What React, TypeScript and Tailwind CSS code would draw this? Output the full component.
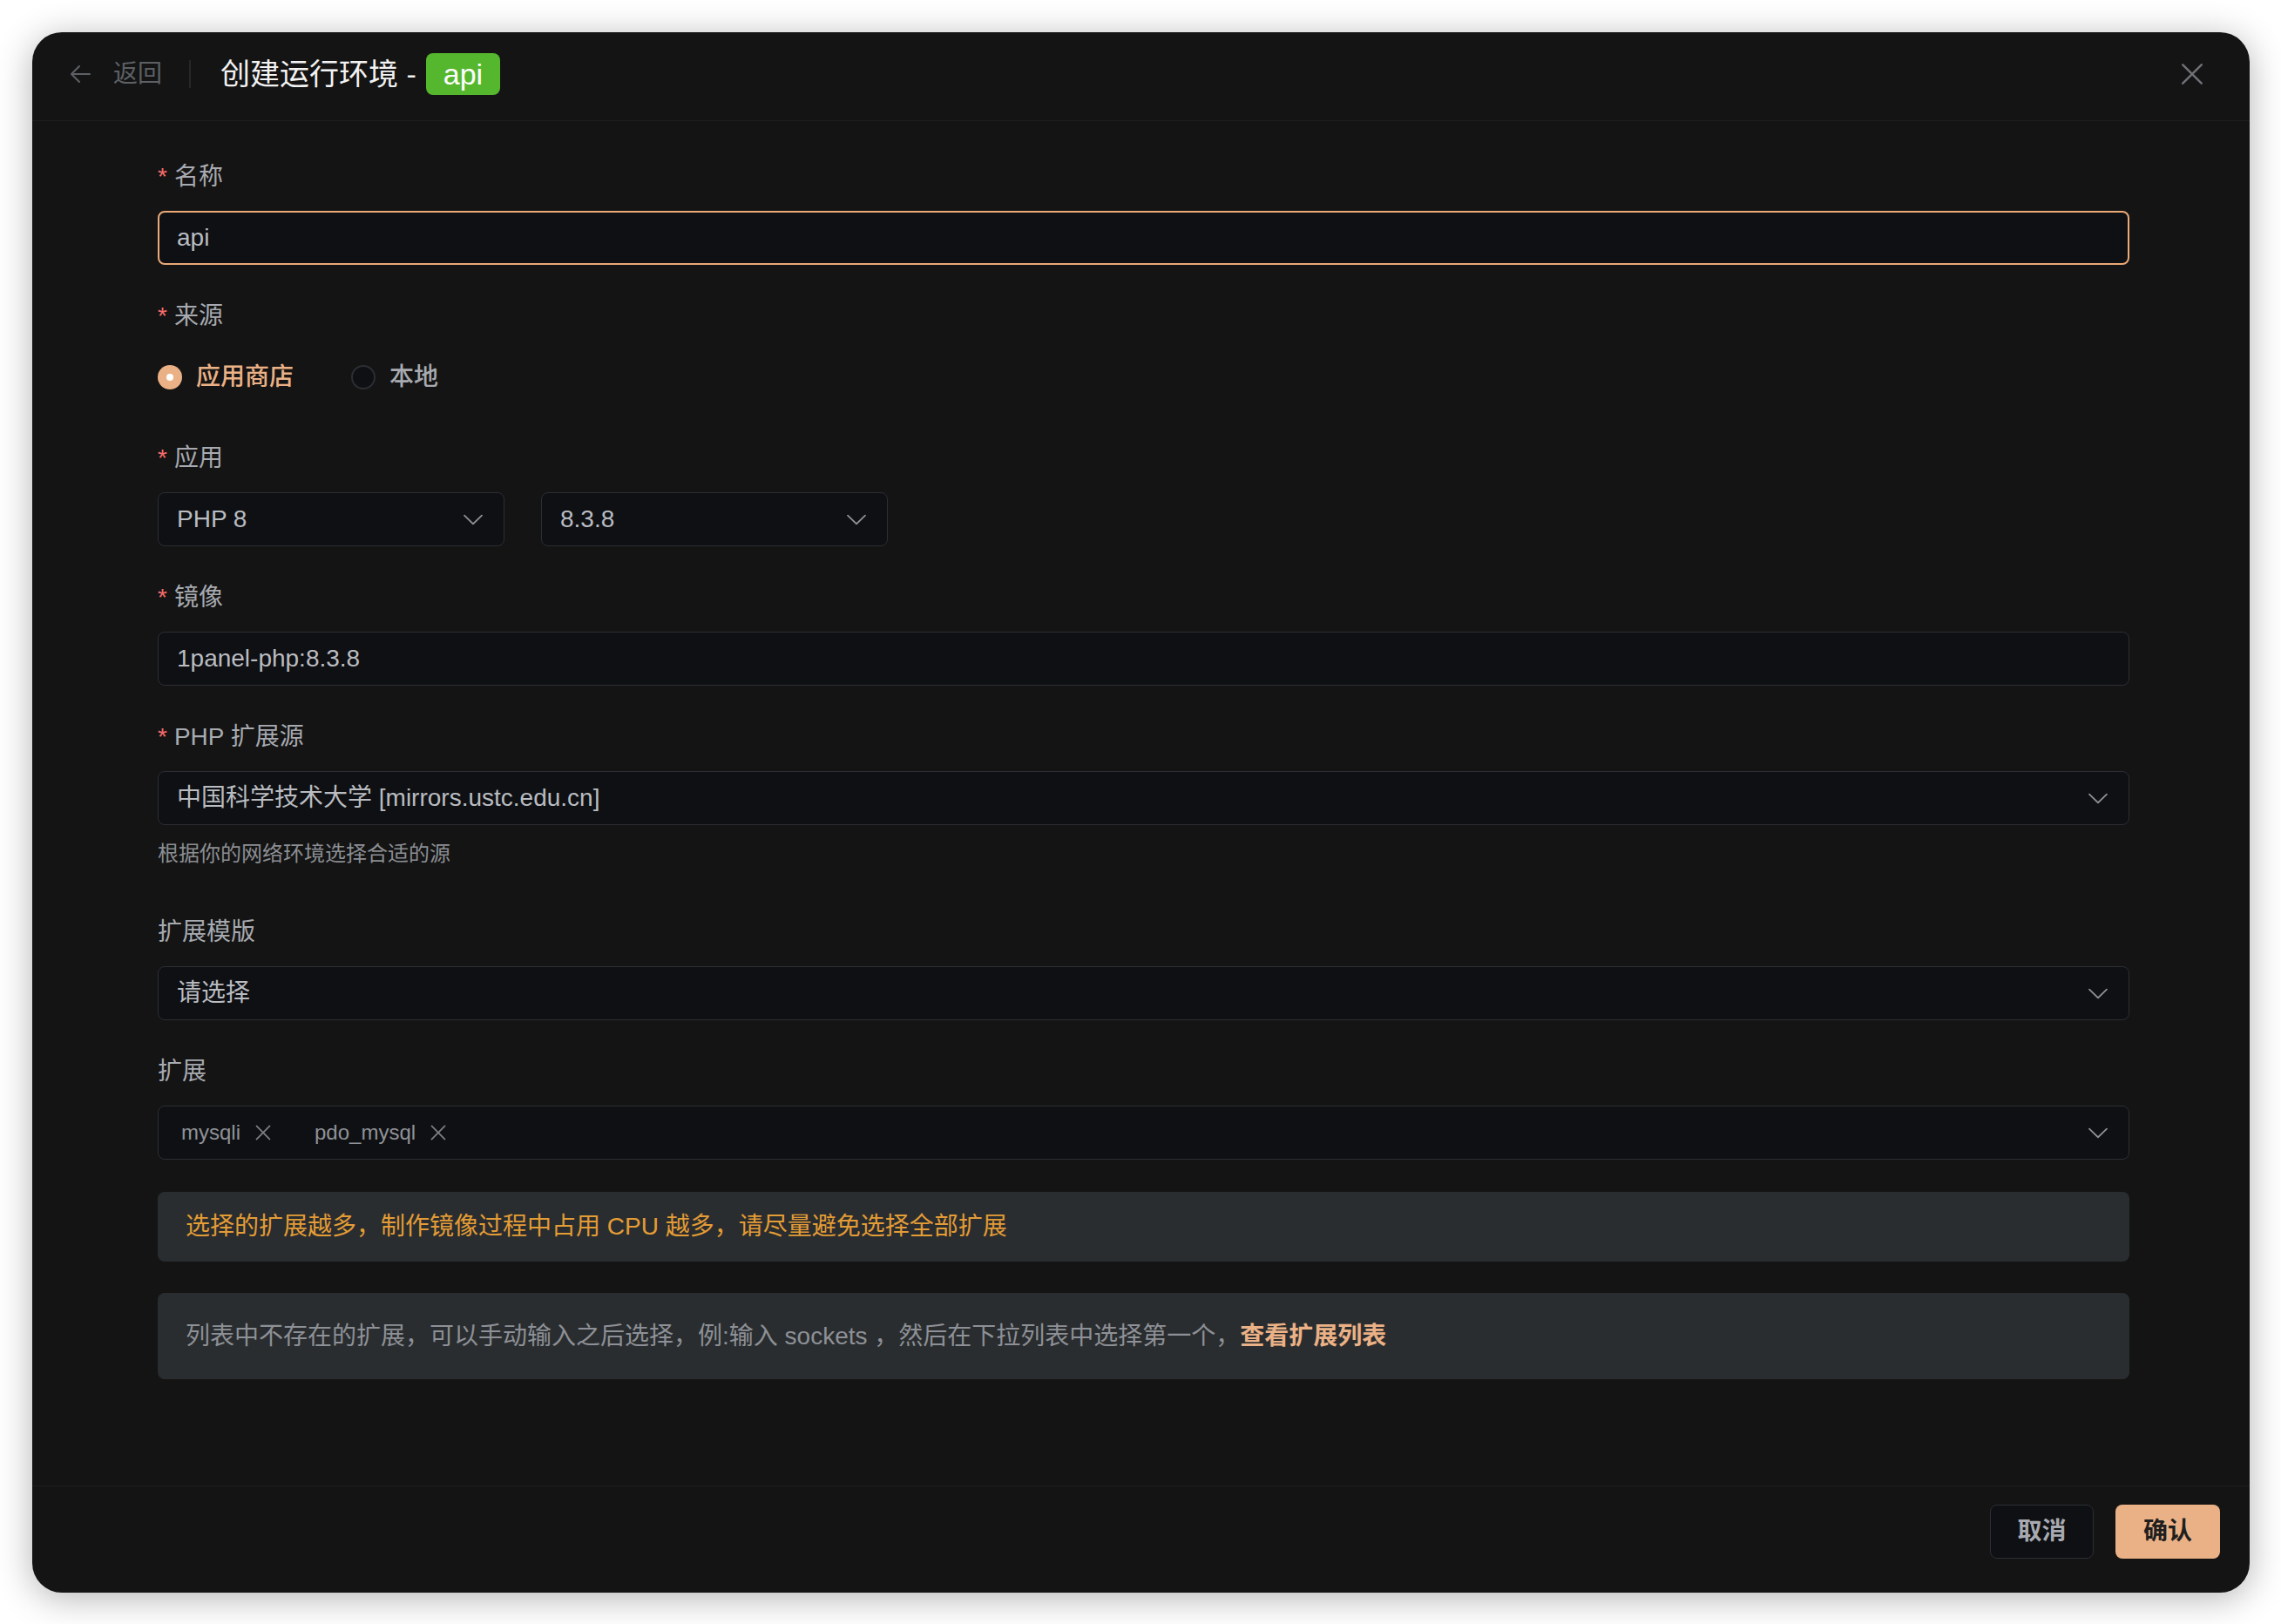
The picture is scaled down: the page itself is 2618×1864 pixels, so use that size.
import type { ReactNode } from "react";

const ARROW_DOWN =
  "M831.872 340.864 512 652.672 192.128 340.864a30.592 30.592 0 0 0-42.752 0 29.12 29.12 0 0 0 0 41.6L489.664 714.24a32 32 0 0 0 44.672 0l340.288-331.712a29.12 29.12 0 0 0 0-41.728 30.592 30.592 0 0 0-42.752 0z";
const CLOSE =
  "M764.288 214.592 512 466.88 259.712 214.592a31.936 31.936 0 0 0-45.12 45.12L466.752 512 214.528 764.224a31.936 31.936 0 1 0 45.12 45.184L512 557.184l252.288 252.288a31.936 31.936 0 0 0 45.12-45.12L557.12 512.064l252.288-252.352a31.936 31.936 0 1 0-45.12-45.184z";
const BACK_BAR = "M224 480h640a32 32 0 1 1 0 64H224a32 32 0 0 1 0-64z";
const BACK_HEAD =
  "m237.248 512 265.408 265.344a32 32 0 0 1-45.312 45.312l-288-288a32 32 0 0 1 0-45.312l288-288a32 32 0 1 1 45.312 45.312L237.248 512z";

function Icon({ d, className }: { d: string[]; className: string }) {
  return (
    <svg viewBox="0 0 1024 1024" fill="currentColor" className={className}>
      {d.map((p) => (
        <path key={p} d={p} />
      ))}
    </svg>
  );
}

function Chevron() {
  return <Icon d={[ARROW_DOWN]} className="h-[30px] w-[30px] shrink-0 text-[#8e9196]" />;
}

function FormItem({
  label,
  required,
  children,
  className = "mb-[37px]",
}: {
  label: string;
  required?: boolean;
  children: ReactNode;
  className?: string;
}) {
  return (
    <div className={className}>
      <div className="flex h-[44px] items-center text-[28px] leading-[44px] text-[#a7aab0]">
        {required && <span className="mr-[8px] text-[#f56c6c]">*</span>}
        {label}
      </div>
      <div className="mt-[17px]">{children}</div>
    </div>
  );
}

function Box({
  children,
  focused,
  className = "",
}: {
  children: ReactNode;
  focused?: boolean;
  className?: string;
}) {
  return (
    <div
      className={`flex h-[62px] items-center justify-between rounded-[8px] bg-[#0f1013] text-[28px] text-[#b9bcc1] ${
        focused ? "border-2 border-[#eaa977]" : "border border-[#2c2e33]"
      } ${className}`}
    >
      {children}
    </div>
  );
}

function SelectTag({ text }: { text: string }) {
  return (
    <div className="flex items-center">
      <span className="text-[24px] text-[#8f9298]">{text}</span>
      <Icon d={[CLOSE]} className="ml-[12px] h-[28px] w-[28px] text-[#7c7f84]" />
    </div>
  );
}

export default function App() {
  return (
    <div className="h-[1864px] w-[2618px] bg-white pl-[37px] pt-[37px] font-['Liberation_Sans','Noto_Sans_CJK_SC',sans-serif]">
      <div className="flex h-[1791px] w-[2545px] flex-col rounded-[34px] bg-[#141414] shadow-[0_6px_40px_rgba(0,0,0,0.3)]">
        {/* header */}
        <div className="flex h-[102px] items-center justify-between border-b border-[#1e1e1f] pb-[5px] pl-[39px] pr-[46px]">
          <div className="flex items-center">
            <Icon d={[BACK_BAR, BACK_HEAD]} className="h-[32px] w-[32px] text-[#5d6065]" />
            <span className="ml-[22px] text-[28px] leading-[40px] text-[#5d6065]">返回</span>
            <span className="ml-[31px] h-[32px] w-[2px] bg-[#262729]" />
            <span className="ml-[34px] text-[34px] leading-[48px] text-[#f2f2f2]">创建运行环境 -</span>
            <span className="ml-[11px] flex h-[48px] items-center rounded-[8px] bg-[#55b72e] px-[20px] text-[34px] leading-[48px] text-white">
              api
            </span>
          </div>
          <Icon d={[CLOSE]} className="h-[40px] w-[40px] text-[#6e7176]" />
        </div>

        {/* body */}
        <div className="flex-1 pl-[144px] pr-[138px] pt-[42px]">
          <FormItem label="名称" required>
            <Box focused className="px-[20px] text-[#b1b4b9]">
              api
            </Box>
          </FormItem>

          <FormItem label="来源" required className="mb-[40px]">
            <div className="flex h-[62px] items-center">
              <div className="mr-[66px] flex items-center">
                <span className="flex h-[28px] w-[28px] items-center justify-center rounded-full bg-[#ebb186]">
                  <span className="h-[8px] w-[8px] rounded-full bg-white" />
                </span>
                <span className="ml-[16px] text-[28px] font-medium text-[#ebb186]">应用商店</span>
              </div>
              <div className="flex items-center">
                <span className="h-[28px] w-[28px] rounded-full border-2 border-[#2b2e33] bg-[#0f1013]" />
                <span className="ml-[16px] text-[28px] font-medium text-[#a7aab0]">本地</span>
              </div>
            </div>
          </FormItem>

          <FormItem label="应用" required>
            <div className="flex gap-[42px]">
              <Box className="w-[398px] pl-[21px] pr-[20px]">
                <span>PHP 8</span>
                <Chevron />
              </Box>
              <Box className="w-[398px] pl-[21px] pr-[20px]">
                <span>8.3.8</span>
                <Chevron />
              </Box>
            </div>
          </FormItem>

          <FormItem label="镜像" required>
            <Box className="px-[21px]">1panel-php:8.3.8</Box>
          </FormItem>

          <FormItem label="PHP 扩展源" required className="mb-0">
            <Box className="pl-[21px] pr-[20px]">
              <span>中国科学技术大学 [mirrors.ustc.edu.cn]</span>
              <Chevron />
            </Box>
          </FormItem>
          <div className="mb-[48px] mt-[13px] text-[24px] leading-[40px] text-[#8b8e93]">
            根据你的网络环境选择合适的源
          </div>

          <FormItem label="扩展模版">
            <Box className="pl-[21px] pr-[20px]">
              <span>请选择</span>
              <Chevron />
            </Box>
          </FormItem>

          <FormItem label="扩展">
            <Box className="pl-[26px] pr-[20px]">
              <div className="flex items-center gap-[45px]">
                <SelectTag text="mysqli" />
                <SelectTag text="pdo_mysql" />
              </div>
              <Chevron />
            </Box>
          </FormItem>

          <div className="mb-[36px] rounded-[8px] bg-[#2a2d2f] px-[32px] py-[24px] text-[28px] leading-[32px] text-[#e39c36]">
            选择的扩展越多，制作镜像过程中占用 CPU 越多，请尽量避免选择全部扩展
          </div>

          <div className="rounded-[8px] bg-[#2a2d2f] px-[32px] py-[30px] text-[28px] leading-[39px] text-[#8d9096]">
            列表中不存在的扩展，可以手动输入之后选择，例:输入 sockets ，然后在下拉列表中选择第一个，
            <span className="font-bold text-[#ebb186]">查看扩展列表</span>
          </div>
        </div>

        {/* footer */}
        <div className="flex h-[123px] justify-end gap-[25px] border-t border-[#1e1e1f] pr-[34px] pt-[21px]">
          <button className="h-[62px] w-[119px] rounded-[8px] border border-[#2c2e33] bg-[#0f1013] text-[28px] font-bold text-[#a7aab0]">
            取消
          </button>
          <button className="h-[62px] w-[120px] rounded-[8px] bg-[#ebb186] text-[28px] font-bold text-[#1f1f1f]">
            确认
          </button>
        </div>
      </div>
    </div>
  );
}
